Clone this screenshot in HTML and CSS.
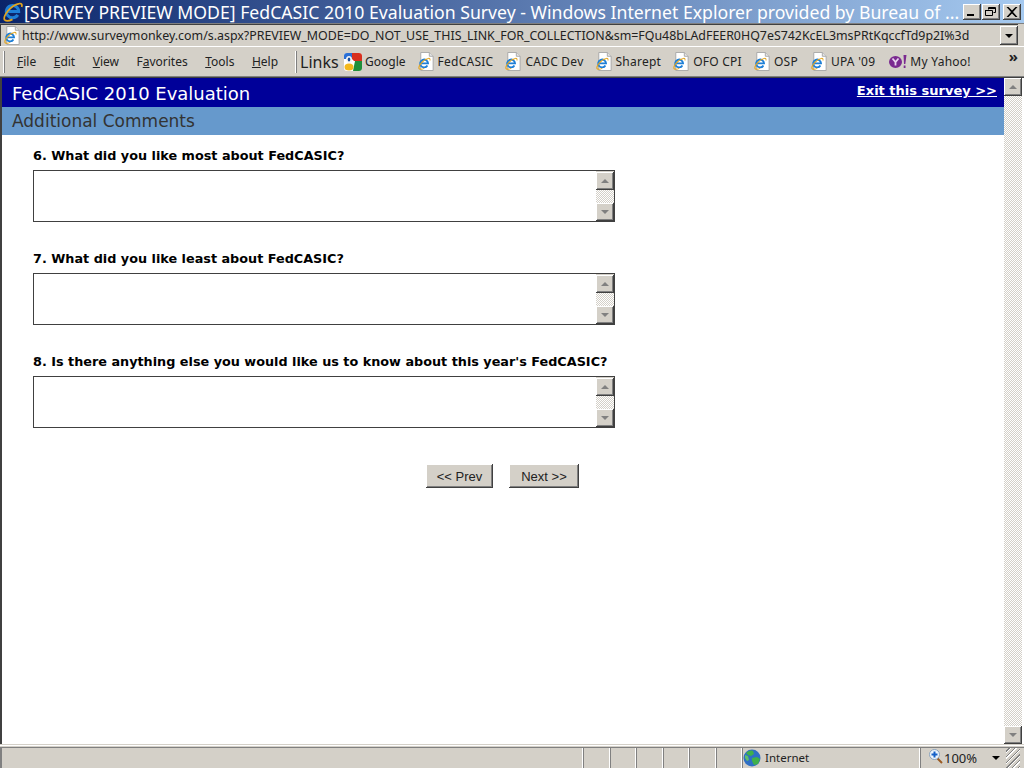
FILE: index.html
```html
<!DOCTYPE html>
<html lang="en">
  <head>
    <meta charset="UTF-8" />
    <title>[SURVEY PREVIEW MODE] FedCASIC 2010 Evaluation Survey</title>
    <link rel="stylesheet" href="styles.css">
  </head>
  <body>
    <svg class="defs" width="0" height="0">
      <symbol id="e" viewBox="0 0 16 16">
        <path d="M12 10.600A4.700 4.700 0 1 1 12.700 8H4" fill="none" stroke="#1e7fd6" stroke-width="2.300"/>
        <path d="M2 14.500C.5 12 6 3.500 13 2c2-.5 2.500 1 2 2.500M2 14.500c1.500 1 4 .5 6-.5" fill="none" stroke="#e3a51e" stroke-width="1.300"/>
      </symbol>
      <symbol id="page" viewBox="0 0 18 20">
        <path d="M3.500.5h9l4 4v15h-13z" fill="#fff" stroke="#a8a8a8"/>
        <path d="M12.500.5v4h4" fill="#e4e4e4" stroke="#a8a8a8"/>
        <use href="#e" x="0" y="5" width="14" height="14"/>
      </symbol>
    </svg>

    <div class="titlebar">
      <svg class="title-icon" width="21" height="21"><use href="#e"/></svg>
      <div class="title-text">[SURVEY PREVIEW MODE] FedCASIC 2010 Evaluation Survey - Windows Internet Explorer provided by Bureau of ...</div>
      <div class="win-btns">
        <button class="win-btn bevel"><svg width="12" height="10"><path d="M1 7h7v2H1z" fill="#000"/></svg></button>
        <button class="win-btn bevel"><svg width="12" height="10"><path d="M3.500 2.500V.5h7v5h-2M.5 3.500h7v5h-7z M.5 3v1M3.500 1v.5h7" fill="none" stroke="#000"/></svg></button>
        <button class="win-btn win-close bevel"><svg width="12" height="10"><path d="M1.500 0l3.500 3.500L8.500 0h2L6 5l4.500 5h-2L5 6.500 1.500 10h-2L4 5-.5 0z" transform="translate(1)" fill="#000"/></svg></button>
      </div>
    </div>

    <div class="addressbar">
      <div class="address-box">
        <svg width="18" height="19"><use href="#page"/></svg>
        <span class="address-url">http://www.surveymonkey.com/s.aspx?PREVIEW_MODE=DO_NOT_USE_THIS_LINK_FOR_COLLECTION&amp;sm=FQu48bLAdFEER0HQ7eS742KcEL3msPRtKqccfTd9p2I%3d</span>
        <button class="drop-btn bevel"><span class="arrow-down"></span></button>
      </div>
    </div>

    <div class="menubar">
      <span class="grip"></span>
      <nav class="menu">
        <span><u>F</u>ile</span>
        <span><u>E</u>dit</span>
        <span><u>V</u>iew</span>
        <span>F<u>a</u>vorites</span>
        <span><u>T</u>ools</span>
        <span><u>H</u>elp</span>
      </nav>
      <span class="grip"></span>
      <span class="links-label">Links</span>
      <div class="links">
        <span class="link link-google">
          <svg width="18" height="18" viewBox="0 0 18 18">
            <rect width="18" height="18" rx="3" fill="#fff"/>
            <path d="M0 3a3 3 0 0 1 3-3h5v6H0z" fill="#2a6fd6"/>
            <path d="M8 0h7a3 3 0 0 1 3 3v5H10L8 6z" fill="#d8301f"/>
            <path d="M11 8h7v7a3 3 0 0 1-3 3H9z" fill="#1f8f3a"/>
            <ellipse cx="5" cy="14" rx="4.500" ry="3.500" fill="#f4b81c"/>
            <ellipse cx="5" cy="6.500" rx="3" ry="3.500" fill="#f7f7f7"/>
            <ellipse cx="5" cy="6.500" rx="1.300" ry="2" fill="#1c4f9c"/>
          </svg>
          Google
        </span>
        <span class="link link-fed"><svg width="18" height="19"><use href="#page"/></svg>FedCASIC</span>
        <span class="link link-cadc"><svg width="18" height="19"><use href="#page"/></svg>CADC Dev</span>
        <span class="link link-share"><svg width="18" height="19"><use href="#page"/></svg>Sharept</span>
        <span class="link link-ofo"><svg width="18" height="19"><use href="#page"/></svg>OFO CPI</span>
        <span class="link link-osp"><svg width="18" height="19"><use href="#page"/></svg>OSP</span>
        <span class="link link-upa"><svg width="18" height="19"><use href="#page"/></svg>UPA '09</span>
        <span class="link link-yahoo">
          <svg width="18" height="16" viewBox="0 0 18 16">
            <ellipse cx="6.500" cy="8" rx="6.500" ry="6" fill="#7b2a90"/>
            <path d="M3.500 4.500l3 3.500 3-3.500M6.500 8v3.500" fill="none" stroke="#e8d4ee" stroke-width="1.800"/>
            <path d="M14.500 1h3l-1.200 9h-1.300zM14.700 11.500h1.800v2.500h-1.800z" fill="#7b2a90"/>
          </svg>
          My Yahoo!
        </span>
      </div>
      <span class="more">&raquo;</span>
    </div>

    <div class="viewport">
      <main class="page">
        <header class="survey-head">
          <div class="survey-title">FedCASIC 2010 Evaluation</div>
          <a class="exit-link" href="#">Exit this survey &gt;&gt;</a>
        </header>
        <div class="survey-section">Additional Comments</div>

        <form class="questions">
          <div class="question">
            <label class="q-label">6. What did you like most about FedCASIC?</label>
            <div class="answer">
              <textarea></textarea>
              <div class="sb sb-small">
                <div class="sb-btn bevel"><span class="arrow-up"></span></div>
                <div class="sb-track"></div>
                <div class="sb-btn bevel"><span class="arrow-down grey"></span></div>
              </div>
            </div>
          </div>
          <div class="question">
            <label class="q-label">7. What did you like least about FedCASIC?</label>
            <div class="answer">
              <textarea></textarea>
              <div class="sb sb-small">
                <div class="sb-btn bevel"><span class="arrow-up"></span></div>
                <div class="sb-track"></div>
                <div class="sb-btn bevel"><span class="arrow-down grey"></span></div>
              </div>
            </div>
          </div>
          <div class="question">
            <label class="q-label">8. Is there anything else you would like us to know about this year's FedCASIC?</label>
            <div class="answer">
              <textarea></textarea>
              <div class="sb sb-small">
                <div class="sb-btn bevel"><span class="arrow-up"></span></div>
                <div class="sb-track"></div>
                <div class="sb-btn bevel"><span class="arrow-down grey"></span></div>
              </div>
            </div>
          </div>
          <div class="nav-btns">
            <button type="button" class="nav-btn nav-prev bevel">&lt;&lt; Prev</button>
            <button type="button" class="nav-btn nav-next bevel">Next &gt;&gt;</button>
          </div>
        </form>
      </main>
      <div class="sb sb-page">
        <div class="sb-btn bevel"><span class="arrow-up"></span></div>
        <div class="sb-track"></div>
        <div class="sb-btn bevel"><span class="arrow-down grey"></span></div>
      </div>
    </div>

    <footer class="statusbar">
      <div class="status-main"></div>
      <div class="status-cell"></div>
      <div class="status-cell"></div>
      <div class="status-cell"></div>
      <div class="status-cell"></div>
      <div class="status-cell"></div>
      <div class="status-cell"></div>
      <div class="status-zone">
        <svg width="18" height="18" viewBox="0 0 18 18">
          <circle cx="9" cy="9" r="8.500" fill="#2f6fc4"/>
          <path d="M3 4c2-2 5-3 7-2l1 3-3 2-3-1zM9 9l5-1 3 2-2 5-4 1-2-4z" fill="#3fb04a"/>
          <path d="M2 6l3 1 1 4-2 1-2-3z" fill="#5fc06a"/>
        </svg>
        <span>Internet</span>
      </div>
      <div class="status-zoom">
        <svg width="14" height="15" viewBox="0 0 14 15">
          <path d="M8 9l5 5" stroke="#9a5a20" stroke-width="2"/>
          <circle cx="5.500" cy="5.500" r="5" fill="#eef4fb" stroke="#8aa2bc"/>
          <path d="M5.500 2.500v6M2.500 5.500h6" stroke="#1560c8" stroke-width="2"/>
        </svg>
        <span class="zoom-val">100%</span>
        <span class="arrow-down"></span>
      </div>
      <div class="sizer"></div>
    </footer>
  </body>
</html>
```

FILE: styles.css
```css
:root {
  --face: #d4d0c8;
  --navy: #000099;
  --steel: #6699cc;
  --line: #404040;
  --shade: #808080;
}
html,
body {
  margin: 0;
  height: 768px;
  overflow: hidden;
}
body {
  width: 1024px;
  background: var(--face);
  font-family: "Noto Sans", "DejaVu Sans", sans-serif;
  color: #000;
  display: flex;
  flex-direction: column;
}
.defs {
  position: absolute;
}
button {
  padding: 0;
  font: inherit;
  color: inherit;
}
.bevel {
  border: 0;
  background: var(--face);
  box-shadow: inset -1px -1px 0 #404040, inset 1px 1px 0 #fff, inset -2px -2px 0 #808080;
}

/* window chrome */
.titlebar {
  height: 23px;
  display: flex;
  align-items: center;
  background: linear-gradient(90deg, #0a246a 0%, #a6caf0 100%);
  color: #fff;
  flex: none;
}
.title-icon {
  margin-left: 2px;
  flex: none;
}
.title-text {
  width: 937px;
  box-sizing: border-box;
  padding-left: 1px;
  font-size: 17.660px;
  white-space: nowrap;
  overflow: hidden;
}
.win-btns {
  display: flex;
  gap: 1px;
  margin-left: 3px;
}
.win-btn {
  width: 18px;
  height: 16px;
  display: flex;
  align-items: center;
  justify-content: center;
}
.win-close {
  margin-left: 2px;
}
.addressbar {
  height: 24px;
  flex: none;
  border-bottom: 1px solid #fff;
  box-sizing: border-box;
  padding: 0 2px 1px 0;
  border-top: 1px solid var(--shade);
}
.address-box {
  height: 21px;
  display: flex;
  align-items: center;
  border-left: 1px solid var(--line);
  border-top: 1px solid var(--line);
  padding-left: 2px;
  font-size: 12.400px;
  color: #222;
  margin-right: 4px;
}
.address-url {
  margin-left: 1px;
  flex: 1;
  white-space: nowrap;
  overflow: hidden;
}
.drop-btn {
  width: 18px;
  height: 19px;
  display: flex;
  align-items: center;
  justify-content: center;
}
.arrow-down,
.arrow-up {
  display: inline-block;
  width: 0;
  height: 0;
  border-left: 4px solid transparent;
  border-right: 4px solid transparent;
}
.arrow-down {
  border-top: 4px solid #000;
}
.arrow-up {
  border-bottom: 4px solid var(--shade);
}
.arrow-down.grey {
  border-top-color: var(--shade);
}
.menubar {
  height: 30px;
  flex: none;
  display: flex;
  align-items: center;
  box-sizing: border-box;
  border-bottom: 1px solid var(--shade);
  padding-left: 3px;
  font-size: 12px;
  color: #222;
  position: relative;
}
.grip {
  width: 1px;
  height: 22px;
  background: #fff;
  border-right: 1px solid var(--shade);
  flex: none;
}
.menu {
  display: flex;
  gap: 17.500px;
  margin-left: 12px;
  width: 278px;
}
.links-label {
  font-size: 16px;
  margin-left: 3px;
  width: 44px;
  flex: none;
}
.links {
  display: flex;
  align-items: center;
  gap: 11px;
  letter-spacing: 0.25px;
}
.link {
  display: flex;
  align-items: center;
  gap: 3px;
  white-space: nowrap;
}
.link-google {
  letter-spacing: 0;
}
.link-upa {
  margin-left: 1px;
}
.link-yahoo {
  margin-left: 3px;
}
.more {
  position: absolute;
  right: 6px;
  top: -1px;
  font-size: 15px;
  font-weight: bold;
}

/* page area */
.viewport {
  height: 666px;
  flex: none;
  display: flex;
  background: #fff;
  border-left: 2px solid var(--line);
  border-top: 1px solid var(--line);
}
.page {
  width: 1002px;
  font-family: "DejaVu Sans", sans-serif;
}
.survey-head {
  height: 29px;
  background: var(--navy);
  color: #fff;
  display: flex;
  justify-content: space-between;
  padding: 0 7px 0 10px;
  box-sizing: border-box;
}
.survey-title {
  font-size: 18px;
  line-height: 32px;
}
.exit-link {
  color: #fff;
  font-size: 13px;
  font-weight: bold;
  line-height: 26px;
}
.survey-section {
  height: 28px;
  background: var(--steel);
  color: #333;
  font-size: 17px;
  line-height: 29px;
  padding-left: 10px;
}
.questions {
  padding: 14px 0 0 31px;
}
.question {
  margin-bottom: 30px;
}
.q-label {
  display: block;
  font-size: 12.800px;
  font-weight: bold;
  line-height: 14px;
  margin-bottom: 7px;
}
.answer {
  width: 580px;
  height: 50px;
  display: flex;
  border: 1px solid var(--line);
}
.answer textarea {
  flex: 1;
  border: 0;
  padding: 0;
  resize: none;
  outline: none;
}
.sb {
  display: flex;
  flex-direction: column;
  flex: none;
}
.sb-small {
  width: 18px;
  border-top: 1px solid var(--face);
}
.sb-page {
  width: 18px;
}
.sb-btn {
  height: 18px;
  display: flex;
  align-items: center;
  justify-content: center;
  flex: none;
}
.sb-track {
  flex: 1;
  background: repeating-conic-gradient(#d4d0c8 0 25%, #fff 0 50%) 0 0 / 2px 2px;
}
.nav-btns {
  display: flex;
  gap: 16px;
  margin: 36px 0 0 393px;
}
.nav-btn {
  height: 24px;
  font-family: "Liberation Sans", sans-serif;
  font-size: 13px;
  color: #222;
}
.nav-prev {
  width: 67px;
}
.nav-next {
  width: 70px;
}

/* status bar */
.statusbar {
  flex: 1;
  display: flex;
  box-shadow: inset 0 1px 0 var(--face), inset 0 2px 0 #fff, inset 0 3px 0 var(--face), inset 0 4px 0 var(--shade);
  font-size: 12px;
  color: #222;
  align-items: stretch;
  line-height: 18px;
}
.status-main {
  width: 581px;
  border-left: 2px solid var(--shade);
  margin-top: 4px;
}
.status-cell,
.status-zone,
.status-zoom {
  border-left: 1px solid var(--shade);
  box-shadow: -1px 0 0 #fff;
  margin-top: 4px;
}
.status-cell {
  width: 25.500px;
}
.status-zone {
  width: 178px;
  display: flex;
  align-items: flex-start;
  gap: 4px;
  font-size: 11.500px;
  padding-top: 1px;
  box-sizing: border-box;
}
.status-zoom {
  width: 86px;
  display: flex;
  align-items: flex-start;
  padding: 1px 0 0 8px;
  box-sizing: border-box;
}
.status-zoom .arrow-down {
  margin-top: 7px;
}
.zoom-val {
  margin: 0 15px 0 1px;
  font-size: 13px;
}
.sizer {
  width: 14px;
  margin-top: 4px;
  background: repeating-linear-gradient(135deg, var(--face) 0 2px, var(--shade) 2px 3px, #fff 3px 4px);
}
```
